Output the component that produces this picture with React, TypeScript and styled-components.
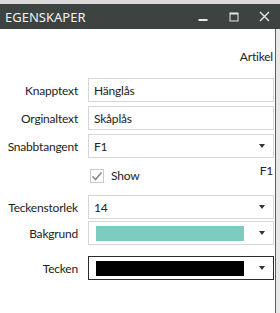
import React from 'react';
import styled, { createGlobalStyle } from 'styled-components';

const GlobalStyle = createGlobalStyle`
  html, body {
    margin: 0;
    padding: 0;
    background: #ffffff;
  }
  * {
    box-sizing: border-box;
  }
`;

const Window = styled.div`
  width: 280px;
  height: 313px;
  display: flex;
  flex-direction: column;
  background: #e4e4e4;
  font-family: Lato, 'Noto Sans', sans-serif;
  font-size: 12px;
  letter-spacing: -0.2px;
  color: #222;
  overflow: hidden;
`;

const TopStrip = styled.div`
  height: 4px;
  background: #dcdcdc;
`;

const TitleBar = styled.div`
  height: 25px;
  background: #3c4340;
  display: flex;
  align-items: center;
  padding-left: 5px;
`;

const Title = styled.div`
  color: #f2f2f2;
  font-family: 'Noto Sans', sans-serif;
  font-size: 13px;
  letter-spacing: 0;
  flex: 1;
`;

const Controls = styled.div`
  display: flex;
  align-items: center;
  height: 100%;
`;

const CtrlBtn = styled.div`
  width: 31px;
  height: 100%;
  display: flex;
  align-items: center;
  justify-content: center;
`;

const Body = styled.div`
  flex: 1;
  display: flex;
`;

const Panel = styled.div`
  width: 276px;
  background: #ffffff;
  border-right: 1px solid #5c5c5c;
  display: flex;
  flex-direction: column;
`;

const ArtikelRow = styled.div`
  height: 20px;
  margin-top: 18px;
  text-align: right;
  padding-right: 2px;
  line-height: 20px;
`;

interface RowProps {
  top: number;
}

const Row = styled.div<RowProps>`
  display: grid;
  grid-template-columns: 78px 186px;
  column-gap: 10px;
  align-items: center;
  margin-top: ${p => p.top}px;
`;

const Label = styled.div`
  text-align: right;
  white-space: nowrap;
`;

interface FieldProps {
  focused?: boolean;
}

const Field = styled.div<FieldProps>`
  height: 24px;
  border: 1px solid ${p => (p.focused ? '#2b2b2b' : '#d6d6d6')};
  background: #fff;
  display: flex;
  align-items: center;
  padding: 0 8px 0 5px;
`;

const FieldText = styled.span`
  flex: 1;
`;

const Arrow = styled.span`
  width: 0;
  height: 0;
  border-left: 3px solid transparent;
  border-right: 3px solid transparent;
  border-top: 4px solid #333;
`;

interface SwatchProps {
  color: string;
}

const Swatch = styled.div<SwatchProps>`
  width: 148px;
  height: 15px;
  margin-left: 2px;
  margin-right: auto;
  background: ${p => p.color};
`;

const CheckRow = styled.div`
  display: flex;
  align-items: center;
  justify-content: space-between;
`;

const CheckWrap = styled.div`
  display: flex;
  align-items: center;
  gap: 7px;
  padding-left: 2px;
  margin-top: 10px;
`;

const CheckBox = styled.div`
  width: 14px;
  height: 14px;
  border: 1px solid #c9c9c9;
  display: flex;
  align-items: center;
  justify-content: center;
`;

const HotkeyHint = styled.span`
  padding-right: 1px;
`;

const RightGutter = styled.div`
  flex: 1;
  background: #e8e8e8;
`;

const App: React.FC = () => {
  return (
    <>
      <GlobalStyle />
      <Window>
        <TopStrip />
        <TitleBar>
          <Title>EGENSKAPER</Title>
          <Controls>
            <CtrlBtn>
              <svg width="10" height="10" viewBox="0 0 10 10">
                <rect x="0.5" y="7" width="9" height="2" fill="#e8e8e8" />
              </svg>
            </CtrlBtn>
            <CtrlBtn>
              <svg width="10" height="10" viewBox="0 0 10 10">
                <rect x="1" y="1" width="8" height="8" fill="none" stroke="#e8e8e8" strokeWidth="1" />
                <rect x="1" y="1" width="8" height="1.5" fill="#e8e8e8" />
              </svg>
            </CtrlBtn>
            <CtrlBtn>
              <svg width="11" height="11" viewBox="0 0 11 11">
                <path d="M1 1 L10 10 M10 1 L1 10" stroke="#e8e8e8" strokeWidth="1.4" />
              </svg>
            </CtrlBtn>
          </Controls>
        </TitleBar>
        <Body>
          <Panel>
            <ArtikelRow>Artikel</ArtikelRow>
            <Row top={11}>
              <Label>Knapptext</Label>
              <Field>
                <FieldText>Hänglås</FieldText>
              </Field>
            </Row>
            <Row top={4}>
              <Label>Orginaltext</Label>
              <Field>
                <FieldText>Skåplås</FieldText>
              </Field>
            </Row>
            <Row top={4}>
              <Label>Snabbtangent</Label>
              <Field>
                <FieldText>F1</FieldText>
                <Arrow />
              </Field>
            </Row>
            <Row top={0}>
              <div />
              <CheckRow>
                <CheckWrap>
                  <CheckBox>
                    <svg width="12" height="10" viewBox="0 0 12 10">
                      <path d="M1.5 5.5 L4.5 8.5 L10.5 1.5" fill="none" stroke="#8a8a8a" strokeWidth="1.6" />
                    </svg>
                  </CheckBox>
                  <span>Show</span>
                </CheckWrap>
                <HotkeyHint>F1</HotkeyHint>
              </CheckRow>
            </Row>
            <Row top={12}>
              <Label>Teckenstorlek</Label>
              <Field>
                <FieldText>14</FieldText>
                <Arrow />
              </Field>
            </Row>
            <Row top={2}>
              <Label>Bakgrund</Label>
              <Field>
                <Swatch color="#7ecbc1" />
                <Arrow />
              </Field>
            </Row>
            <Row top={11}>
              <Label>Tecken</Label>
              <Field focused>
                <Swatch color="#000000" />
                <Arrow />
              </Field>
            </Row>
          </Panel>
          <RightGutter />
        </Body>
      </Window>
    </>
  );
};

export default App;
